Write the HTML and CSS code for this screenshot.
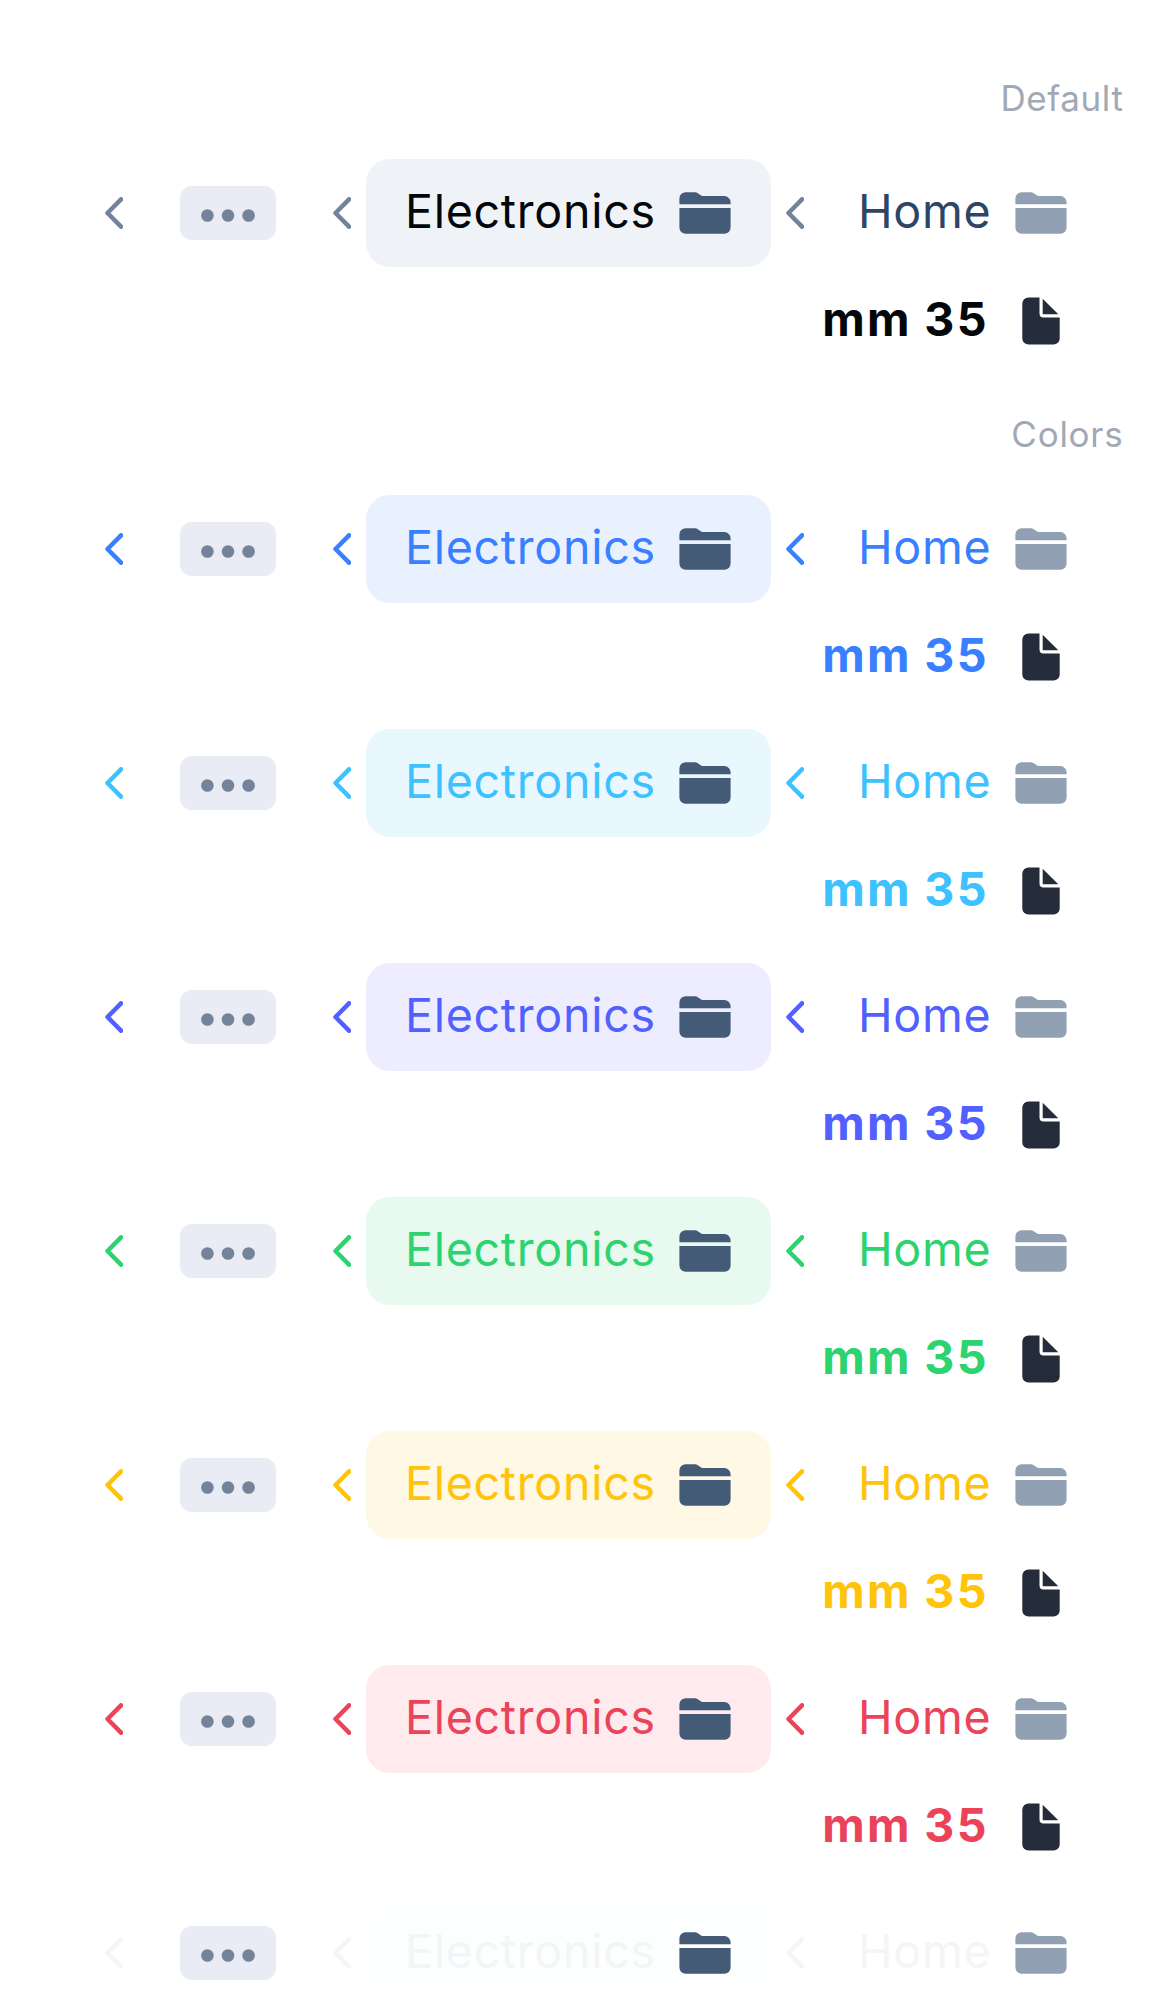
FILE: index.html
```
<!DOCTYPE html>
<html lang="en">
<head>
<meta charset="utf-8">
<title>Breadcrumbs</title>
<link rel="stylesheet" href="styles.css">
</head>
<body>
<svg class="sprite" aria-hidden="true">
  <symbol id="chevron" viewBox="0 0 18 32"><path d="M16 2.300 2.500 16 16 29.700" fill="none" stroke="currentColor" stroke-width="4.500" stroke-linecap="round" stroke-linejoin="round"/></symbol>
  <symbol id="folder" viewBox="0 0 52 42"><path d="M.4 12.200V6.500A6.200 6.200 0 0 1 6.600.3h8.600c1.600 0 3 .5 4.300 1.400l2.300 1.600c.8.6 1.600.8 2.600.8h21a6.200 6.200 0 0 1 6.200 6.200v1.900zM.4 16h51.200v19.500a6.200 6.200 0 0 1-6.200 6.200H6.600a6.200 6.200 0 0 1-6.200-6.200z" fill="currentColor"/></symbol>
  <symbol id="document" viewBox="0 0 38 48"><path d="M17.500.4v16.200a4 4 0 0 0 4 4h16.200v20.800a6.200 6.200 0 0 1-6.200 6.200h-25a6.200 6.200 0 0 1-6.200-6.200V6.600A6.200 6.200 0 0 1 6.500.4zM20.700 1.800l15.600 15.500H21.200a.5.5 0 0 1-.5-.5z" fill="currentColor"/></symbol>
  <symbol id="dots" viewBox="0 0 54 13"><g fill="currentColor"><circle cx="6.400" cy="6.500" r="6.300"/><circle cx="27" cy="6.500" r="6.300"/><circle cx="47.600" cy="6.500" r="6.300"/></g></symbol>
</svg>
<main>
  <h2 class="label label-first">Default</h2>
  <nav class="crumbs default">
    <div class="line"><svg class="chevron"><use href="#chevron"/></svg><span class="more"><svg class="dots"><use href="#dots"/></svg></span><svg class="chevron"><use href="#chevron"/></svg><a class="active"><span>Electronics</span><svg class="folder"><use href="#folder"/></svg></a><svg class="chevron"><use href="#chevron"/></svg><a class="home"><span>Home</span><svg class="folder"><use href="#folder"/></svg></a></div>
    <div class="line last"><span>mm 35</span><svg class="document"><use href="#document"/></svg></div>
  </nav>
  <h2 class="label">Colors</h2>
  <nav class="crumbs primary">
    <div class="line"><svg class="chevron"><use href="#chevron"/></svg><span class="more"><svg class="dots"><use href="#dots"/></svg></span><svg class="chevron"><use href="#chevron"/></svg><a class="active"><span>Electronics</span><svg class="folder"><use href="#folder"/></svg></a><svg class="chevron"><use href="#chevron"/></svg><a class="home"><span>Home</span><svg class="folder"><use href="#folder"/></svg></a></div>
    <div class="line last"><span>mm 35</span><svg class="document"><use href="#document"/></svg></div>
  </nav>
  <nav class="crumbs secondary">
    <div class="line"><svg class="chevron"><use href="#chevron"/></svg><span class="more"><svg class="dots"><use href="#dots"/></svg></span><svg class="chevron"><use href="#chevron"/></svg><a class="active"><span>Electronics</span><svg class="folder"><use href="#folder"/></svg></a><svg class="chevron"><use href="#chevron"/></svg><a class="home"><span>Home</span><svg class="folder"><use href="#folder"/></svg></a></div>
    <div class="line last"><span>mm 35</span><svg class="document"><use href="#document"/></svg></div>
  </nav>
  <nav class="crumbs tertiary">
    <div class="line"><svg class="chevron"><use href="#chevron"/></svg><span class="more"><svg class="dots"><use href="#dots"/></svg></span><svg class="chevron"><use href="#chevron"/></svg><a class="active"><span>Electronics</span><svg class="folder"><use href="#folder"/></svg></a><svg class="chevron"><use href="#chevron"/></svg><a class="home"><span>Home</span><svg class="folder"><use href="#folder"/></svg></a></div>
    <div class="line last"><span>mm 35</span><svg class="document"><use href="#document"/></svg></div>
  </nav>
  <nav class="crumbs success">
    <div class="line"><svg class="chevron"><use href="#chevron"/></svg><span class="more"><svg class="dots"><use href="#dots"/></svg></span><svg class="chevron"><use href="#chevron"/></svg><a class="active"><span>Electronics</span><svg class="folder"><use href="#folder"/></svg></a><svg class="chevron"><use href="#chevron"/></svg><a class="home"><span>Home</span><svg class="folder"><use href="#folder"/></svg></a></div>
    <div class="line last"><span>mm 35</span><svg class="document"><use href="#document"/></svg></div>
  </nav>
  <nav class="crumbs warning">
    <div class="line"><svg class="chevron"><use href="#chevron"/></svg><span class="more"><svg class="dots"><use href="#dots"/></svg></span><svg class="chevron"><use href="#chevron"/></svg><a class="active"><span>Electronics</span><svg class="folder"><use href="#folder"/></svg></a><svg class="chevron"><use href="#chevron"/></svg><a class="home"><span>Home</span><svg class="folder"><use href="#folder"/></svg></a></div>
    <div class="line last"><span>mm 35</span><svg class="document"><use href="#document"/></svg></div>
  </nav>
  <nav class="crumbs danger">
    <div class="line"><svg class="chevron"><use href="#chevron"/></svg><span class="more"><svg class="dots"><use href="#dots"/></svg></span><svg class="chevron"><use href="#chevron"/></svg><a class="active"><span>Electronics</span><svg class="folder"><use href="#folder"/></svg></a><svg class="chevron"><use href="#chevron"/></svg><a class="home"><span>Home</span><svg class="folder"><use href="#folder"/></svg></a></div>
    <div class="line last"><span>mm 35</span><svg class="document"><use href="#document"/></svg></div>
  </nav>
  <nav class="crumbs light">
    <div class="line"><svg class="chevron"><use href="#chevron"/></svg><span class="more"><svg class="dots"><use href="#dots"/></svg></span><svg class="chevron"><use href="#chevron"/></svg><a class="active"><span>Electronics</span><svg class="folder"><use href="#folder"/></svg></a><svg class="chevron"><use href="#chevron"/></svg><a class="home"><span>Home</span><svg class="folder"><use href="#folder"/></svg></a></div>
  </nav>
</main>
</body>
</html>
```
FILE: styles.css
```
* { box-sizing: border-box; }

body {
  margin: 0;
  background: #fff;
  font-family: Inter, "Liberation Sans", sans-serif;
}

main {
  width: 1170px;
  height: 1992px;
  overflow: hidden;
}

svg { display: block; flex: none; }
.sprite { display: none; }

.label {
  margin: 0;
  height: 120px;
  padding: 38px 46.5px 0 0;
  font-size: 35px;
  line-height: 42px;
  font-weight: 400;
  letter-spacing: 0.75px;
  text-align: right;
  color: #a2a9b4;
}

.label-first {
  height: 159px;
  padding-top: 77px;
  letter-spacing: 0.600px;
}

.crumbs + .crumbs { margin-top: 18px; }

.line {
  display: flex;
  align-items: center;
  height: 108px;
  padding-left: 105px;
  font-size: 46.6px;
  letter-spacing: 0.7px;
  line-height: 104px;
  white-space: nowrap;
  color: var(--text);
}

.line span { height: 108px; }

.chevron {
  width: 18px;
  height: 32px;
  color: var(--chevron, var(--text));
}

.line .more {
  display: flex;
  justify-content: center;
  width: 96px;
  height: 54px;
  margin: 0 57px;
  padding-top: 23.3px;
  border-radius: 12px;
  background: #e9ecf4;
  color: #73849a;
}

.dots { width: 54px; height: 13px; }

.active, .home {
  display: flex;
  align-items: center;
  justify-content: space-between;
  height: 108px;
}

.active {
  width: 405px;
  margin: 0 15px;
  padding: 0 40px 0 39px;
  border-radius: 24px;
  background: var(--fill);
  color: var(--active, var(--text));
}

.home {
  width: 263px;
  padding-left: 54px;
}

.folder {
  width: 52px;
  height: 42px;
  color: #92a0b3;
}

.active .folder { color: #445b78; }

.last {
  width: 1060px;
  padding-left: 822.300px;
  justify-content: space-between;
  font-weight: 700;
  letter-spacing: 2.300px;
  color: var(--active, var(--text));
}

.last span { word-spacing: -1px; }

.document {
  width: 38px;
  height: 48px;
  color: #242c39;
}

.default { --text: #2d4665; --chevron: #73849a; --active: #03060b; --fill: #eff3f8; }
.primary { --text: #3880ff; --fill: #e9f1ff; }
.secondary { --text: #3dc2ff; --fill: #e9f7ff; }
.tertiary { --text: #5260ff; --fill: #ededff; }
.success { --text: #2dd36f; --fill: #e8f9f0; }
.warning { --text: #ffc409; --fill: #fff8e5; }
.danger { --text: #eb445a; --fill: #ffeaed; }
.light { --text: #f4f5f8; --fill: #fdfffe; }
```
